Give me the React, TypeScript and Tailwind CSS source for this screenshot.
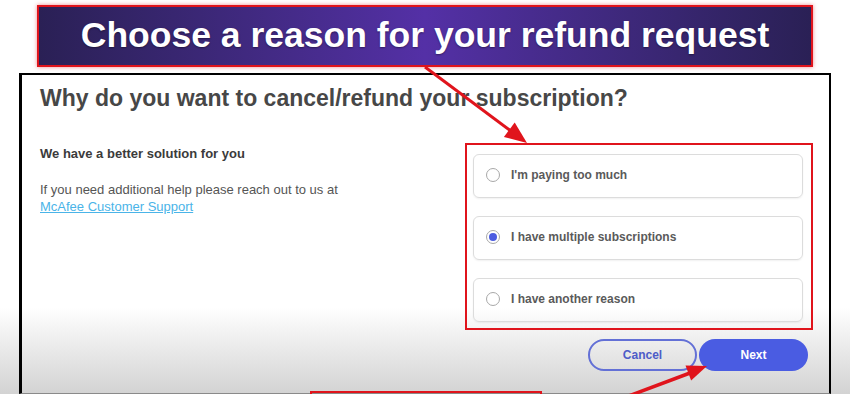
import React, { useState } from 'react';

const reasons = [
  { id: 'price', label: "I'm paying too much" },
  { id: 'multiple', label: 'I have multiple subscriptions' },
  { id: 'other', label: 'I have another reason' },
];

const App = () => {
  const [reason, setReason] = useState('multiple');

  return (
    <div className="relative w-[850px] h-[394px] overflow-hidden bg-linear-to-b from-white via-white via-78% to-[#d3d3d3] font-['Liberation_Sans',Arial,sans-serif]">
      {/* Banner */}
      <div className="mt-[5px] ml-[37px] w-[776px] h-[62px] border-2 border-[#e0141c] shadow-[0_0_4px_rgba(224,20,28,0.5)] bg-linear-to-r from-[#2a2055] via-[#5430a6] to-[#2a2055] flex items-center justify-center">
        <h1 className="text-white font-bold text-[35.5px] leading-none [text-shadow:0_1px_2px_rgba(0,0,0,0.4)]">
          Choose a reason for your refund request
        </h1>
      </div>

      {/* Panel */}
      <div className="mt-[6px] ml-[19px] w-[812px] h-[321px] border-t-2 border-r-2 border-l-[3px] border-b border-black border-b-[#8a8a8a] pl-[18px] pr-[16px] pt-[10px]">
        <h2 className="text-[23px] leading-[26px] font-bold text-[#474747]">
          Why do you want to cancel/refund your subscription?
        </h2>

        <div className="flex mt-[32px]">
          <div className="flex-1 pt-[3px]">
            <p className="text-[13px] leading-4 font-bold text-[#3b3b3b]">We have a better solution for you</p>
            <p className="mt-[19px] text-[13px] leading-[17px] text-[#555]">
              If you need additional help please reach out to us at
            </p>
            <a href="#" className="block w-fit text-[13px] leading-[17px] text-[#4ab4e8] underline">
              McAfee Customer Support
            </a>
          </div>

          <div className="w-[348px] flex flex-col">
            <div className="border-2 border-[#e0141c] pl-[6px] pr-[8px] pt-[9px] pb-[6px] flex flex-col gap-[18px]">
              {reasons.map(r => (
                <label
                  key={r.id}
                  onClick={() => setReason(r.id)}
                  className="h-[44px] flex items-center gap-[11px] pl-[12px] pb-[2px] rounded-md border border-[#dcdcdc] shadow-[0_1px_2px_rgba(0,0,0,0.06)] cursor-pointer"
                >
                  <span className="w-[14px] h-[14px] rounded-full border border-[#a8a8a8] bg-white flex items-center justify-center">
                    {reason === r.id && <span className="w-[8px] h-[8px] rounded-full bg-[#4b5be0]" />}
                  </span>
                  <span className="text-[12px] font-bold text-[#5a5a5a]">{r.label}</span>
                </label>
              ))}
            </div>

            <div className="flex justify-end gap-[2px] mt-[9px] pr-[5px]">
              <button className="w-[109px] h-[32px] rounded-full border-2 border-[#6370d6] text-[#4d5cc8] text-[12px] font-bold">
                Cancel
              </button>
              <button className="w-[109px] h-[32px] rounded-full bg-[#4a5ce2] text-white text-[12px] font-bold">
                Next
              </button>
            </div>
          </div>
        </div>
      </div>

      {/* Partial callout at the bottom edge */}
      <div className="absolute left-[310px] top-[391px] w-[232px] h-[10px] border-2 border-[#e0141c]" />

      {/* Annotation arrows */}
      <svg className="absolute inset-0 pointer-events-none" width="850" height="394" viewBox="0 0 850 394">
        <line x1="425" y1="67" x2="511" y2="131" stroke="#e0141c" strokeWidth="3" />
        <polygon points="527,143 503.9,137 514.7,122.6" fill="#e0141c" />
        <line x1="626" y1="397" x2="690" y2="373" stroke="#e0141c" strokeWidth="3.5" />
        <polygon points="707,366 691.1,380.6 685.5,365.6" fill="#e0141c" />
      </svg>
    </div>
  );
};

export default App;
